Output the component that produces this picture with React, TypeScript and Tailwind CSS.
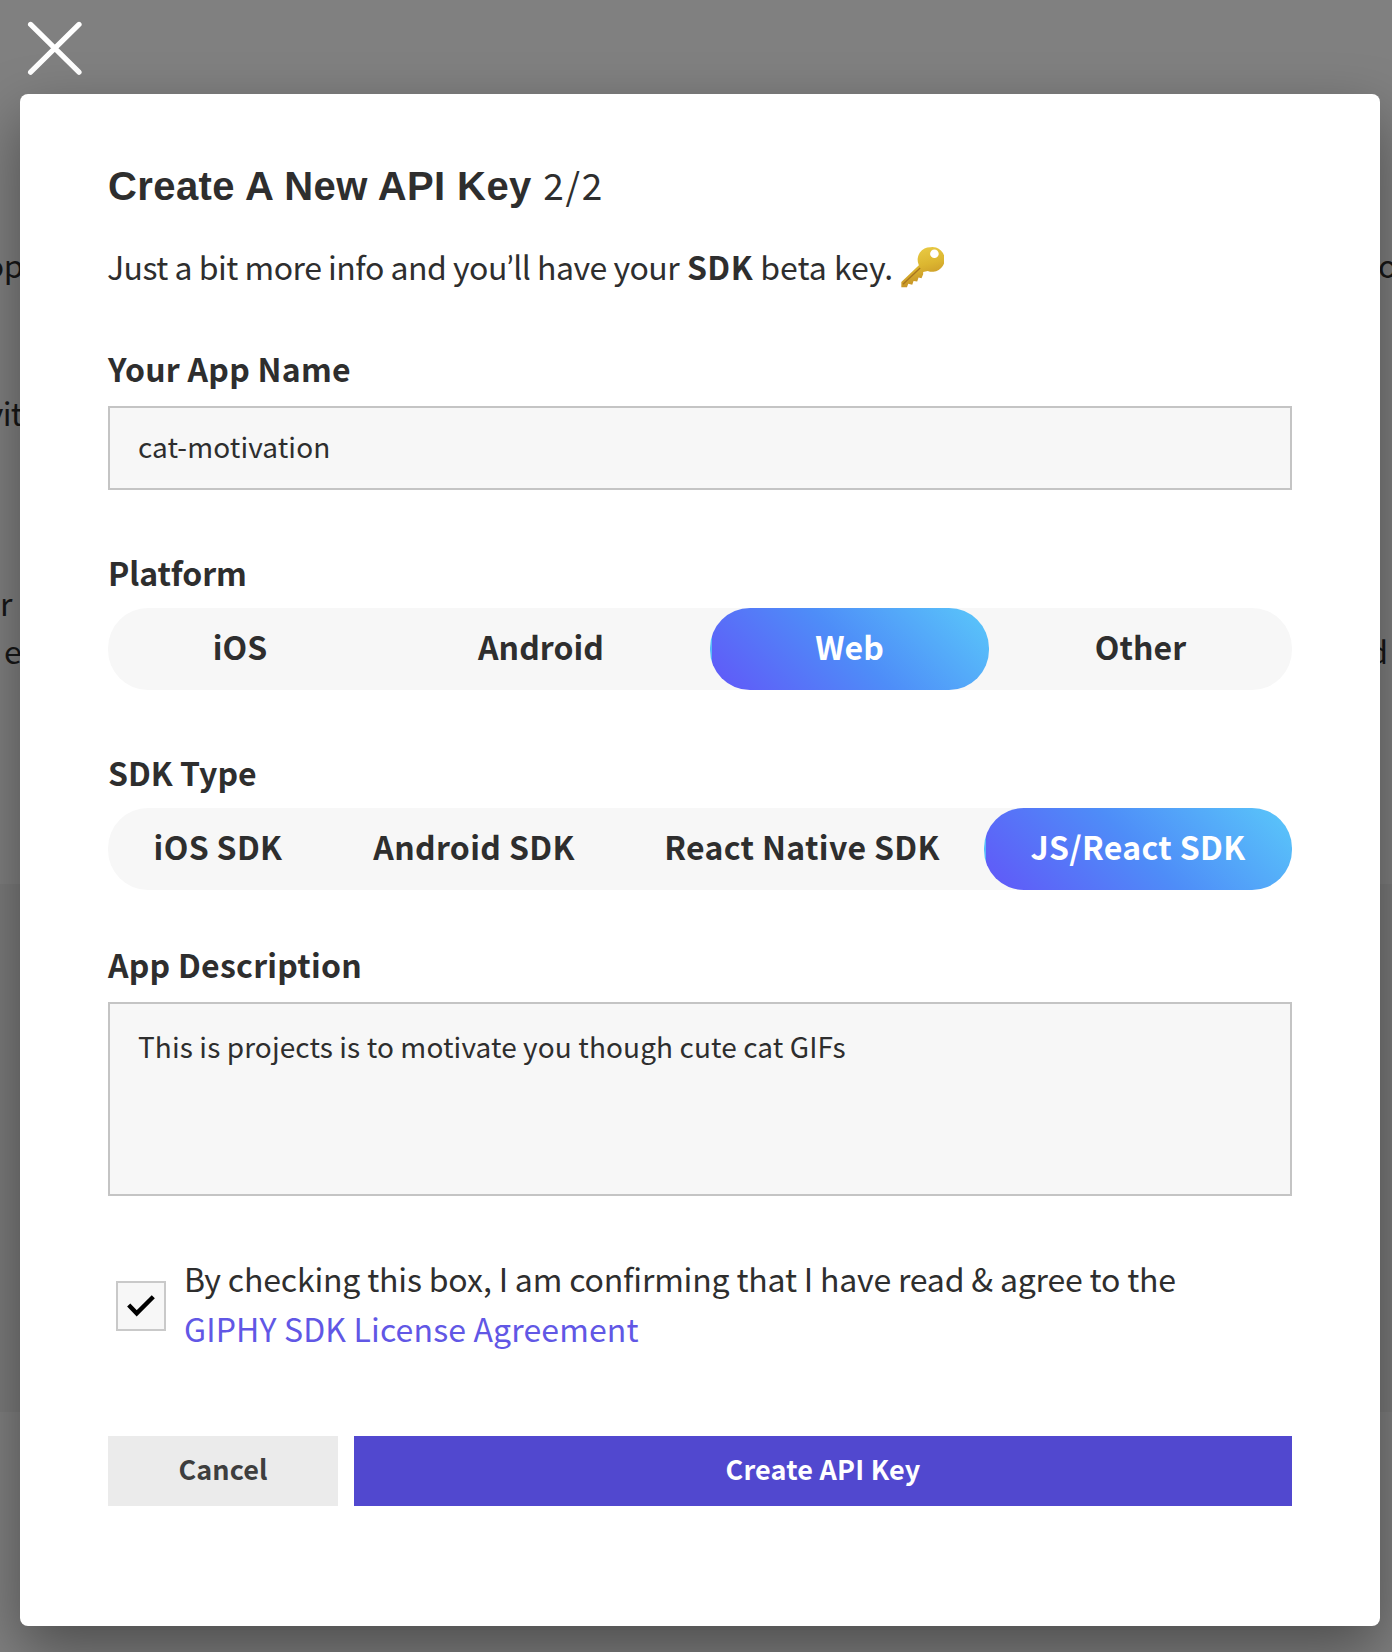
import type { ReactNode } from "react";

const PLATFORMS = ["iOS", "Android", "Web", "Other"];
const SDKS = ["iOS SDK", "Android SDK", "React Native SDK", "JS/React SDK"];

function CloseIcon() {
  return (
    <svg viewBox="0 0 56 56" className="h-14 w-14" fill="none" stroke="white" strokeWidth="5.2" strokeLinecap="round">
      <path d="M4.6 4.4 53 52.2M53 4.4 4.6 52.2" />
    </svg>
  );
}

function KeyIcon() {
  return (
    <svg viewBox="28 28 130 126" className="ml-px mt-[2px] h-[42px] w-[43px] self-center">
      <defs>
        <linearGradient id="keyGold" x1="0" y1="0" x2="0.3" y2="1">
          <stop offset="0" stopColor="#ecd04a" />
          <stop offset="0.55" stopColor="#dcb630" />
          <stop offset="1" stopColor="#c49026" />
        </linearGradient>
      </defs>
      <path
        fill="url(#keyGold)"
        fillRule="evenodd"
        d="M117 31a38 38 0 0 0-36 52l1 3-53 50v16h17l4-10 12 3 4-12 11 2 4-12 9 2 5-12 0-7 14-3a37.500 37.500 0 1 0 8-72Zm12 7a13 13 0 1 1 0 26 13 13 0 0 1 0-26Z"
      />
      <path d="M86 94 34 143" stroke="#a87520" strokeWidth="4" />
    </svg>
  );
}

function FieldLabel({ className, children }: { className: string; children: ReactNode }) {
  return <label className={`block h-12 font-bold leading-[48px] ${className}`}>{children}</label>;
}

function PillGroup({ options, selected, columns }: { options: string[]; selected: string; columns: string }) {
  return (
    <div className={`mt-3 grid h-[82px] rounded-[40px] bg-[#f7f7f7] ${columns}`}>
      {options.map((o) => (
        <button
          key={o}
          className={
            "flex items-center justify-center rounded-[40px] pb-[6px] font-bold " +
            (o === selected
              ? "border-l-2 border-transparent bg-[linear-gradient(45deg,#6157f8,#4e8df8_50%,#5ac8fa)] pr-[2px] text-white"
              : "")
          }
        >
          {o}
        </button>
      ))}
    </div>
  );
}

/** Page content that stays visible around the dialog. */
function Backdrop() {
  return (
    <div className="absolute inset-0 overflow-hidden bg-[#808080] text-[32px] leading-[48px] text-[#171717]">
      <div className="absolute inset-x-0 top-[884px] h-[528px] bg-[#7b7b7b]" />
      <span className="absolute right-[1369px] top-[240px] tracking-[-0.5px]">op</span>
      <span className="absolute right-[1370px] top-[388px] tracking-[-0.8px]">vit</span>
      <span className="absolute left-0 top-[578px]">r</span>
      <span className="absolute left-[4px] top-[626px]">e</span>
      <span className="absolute left-[1378px] top-[240px]">o</span>
      <span className="absolute right-[4px] top-[626px]">d</span>
    </div>
  );
}

export default function App() {
  return (
    <div className="relative h-[1652px] w-[1392px] overflow-hidden font-['Noto_Sans_CJK_SC',sans-serif] text-[32px] text-[#2e2e2e]">
      <Backdrop />
      <button className="relative ml-[26px] mt-5 block h-14 w-14" aria-label="Close">
        <CloseIcon />
      </button>

      <main className="relative ml-5 mt-[18px] h-[1532px] w-[1360px] rounded-[8px] bg-white px-[88px] pt-[66px] shadow-[0_24px_60px_rgba(0,0,0,0.4)]">
        <h1 className="flex h-12 items-baseline whitespace-pre leading-[48px]">
          <span className="font-['Liberation_Sans',sans-serif] text-[40px] font-bold tracking-[0.4px]">Create A New API Key </span>
          <span className="text-[37px] tracking-[1.8px]">2/2</span>
        </h1>

        <p className="mt-[34px] flex h-12 items-baseline whitespace-pre leading-[48px]">
          <span className="-ml-px tracking-[-0.5px]">
            Just a bit more info and you<span className="font-['Lato'] leading-none">’</span>ll have your{" "}
          </span>
          <b className="ml-px tracking-[0.5px]">SDK</b>
          <span> beta key. </span>
          <KeyIcon />
        </p>

        <FieldLabel className="mt-[54px] tracking-[0.25px]">Your App Name</FieldLabel>
        <input
          className="mt-[14px] block h-[84px] w-full border-2 border-[#c4c4c4] bg-[#f7f7f7] px-7 pb-[4px] text-[28px] tracking-[0.1px] outline-none"
          defaultValue="cat-motivation"
        />

        <FieldLabel className="mt-[58px] tracking-[-0.1px]">Platform</FieldLabel>
        <PillGroup options={PLATFORMS} selected="Web" columns="grid-cols-[264px_338px_279px_303px] tracking-[0.05px]" />

        <FieldLabel className="mt-[58px]">SDK Type</FieldLabel>
        <PillGroup options={SDKS} selected="JS/React SDK" columns="grid-cols-[220px_292px_364px_308px] tracking-[0.35px]" />

        <FieldLabel className="mt-[50px] tracking-[0.25px]">App Description</FieldLabel>
        <textarea
          className="mt-[14px] block h-[194px] w-full resize-none border-2 border-[#c4c4c4] bg-[#f7f7f7] px-7 pt-[22px] text-[28px] leading-10 tracking-[0.1px] outline-none"
          defaultValue="This is projects is to motivate you though cute cat GIFs"
        />

        <div className="mt-[57px] flex h-[100px] pl-2">
          <span className="mt-7 h-[50px] w-[50px] border-2 border-[#c9c9c9] bg-[#f7f7f7]">
            <svg viewBox="0 0 46 46" className="h-[46px] w-[46px]" fill="none" stroke="black" strokeWidth="4.4">
              <path d="M10.7 22 18.7 30.3 35.3 13.7" />
            </svg>
          </span>
          <p className="ml-[18px] whitespace-nowrap leading-[50px]">
            <span className="tracking-[-0.18px]">By checking this box, I am confirming that I have read &amp; agree to the</span>
            <br />
            <a className="tracking-[0.14px] text-[#6157e5]">GIPHY SDK License Agreement</a>
          </p>
        </div>

        <div className="mt-[83px] flex h-[70px] gap-4 text-[27px] font-bold">
          <button className="w-[230px] bg-[#ebebeb] pb-[3px] tracking-[0.1px] text-[#3e3e3e]">Cancel</button>
          <button className="flex-1 bg-[#5148cf] pb-[3px] tracking-[0.2px] text-white">Create API Key</button>
        </div>
      </main>
    </div>
  );
}
